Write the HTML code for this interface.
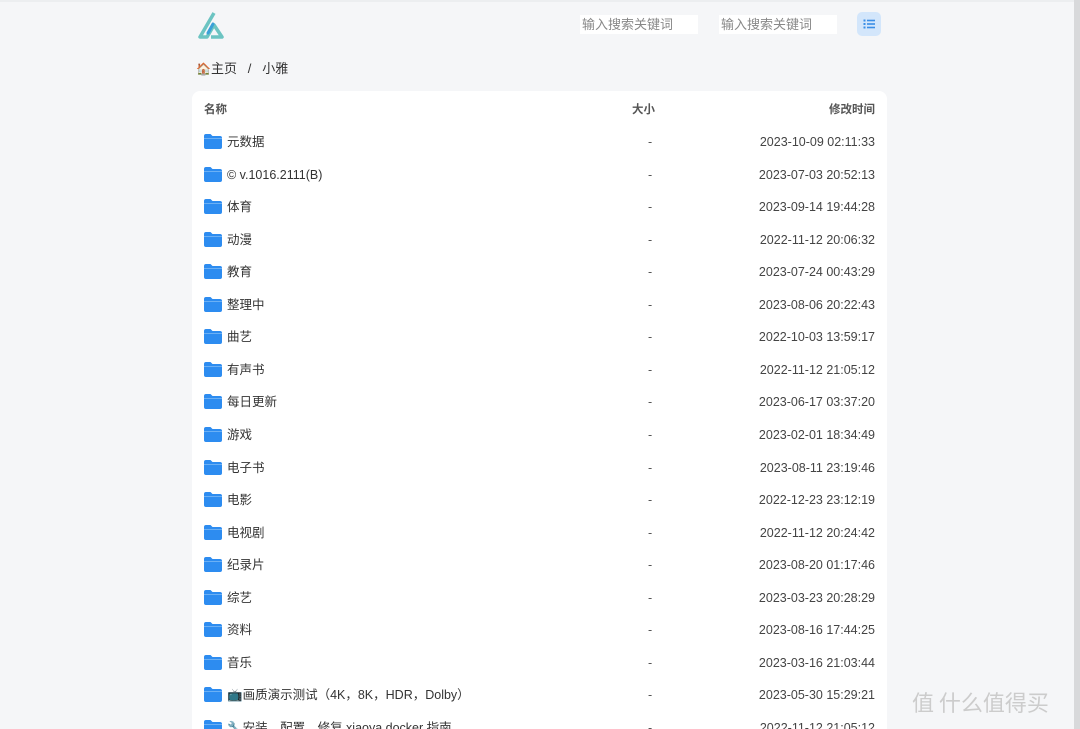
<!DOCTYPE html>
<html style="width:1080px;height:729px;overflow:hidden"><head><meta charset="utf-8"><style>
*{margin:0;padding:0;box-sizing:border-box}
body{width:1080px;height:729px;overflow:hidden;background:#f5f6f8;font-family:"Liberation Sans","Noto Sans CJK SC",sans-serif;color:#333;position:relative;font-size:12px}
.sb{position:absolute;right:0;top:0;width:6px;height:729px;background:#d8d9db}
.top{position:absolute;top:0;left:0;width:1074px;height:2px;background:#eceef0}
.inp{position:absolute;top:15px;height:19px;width:118px;background:#fff;color:#888;font-size:13px;line-height:19px;padding-left:2px}
.btn{position:absolute;left:857px;top:12px;width:24px;height:24px;border-radius:5px;background:#d3e6fb}
.bc{position:absolute;left:196px;top:58px;font-size:13px;color:#333}
.card{position:absolute;left:192px;top:91px;width:695px;height:638px;background:#fff;border-radius:8px 8px 0 0;overflow:hidden}
.row{position:absolute;left:0;width:695px;height:20px;line-height:20px;font-size:12.5px}
.row .n{position:absolute;left:35px}
.row .s{position:absolute;left:456px;color:#555}
.row .t{position:absolute;right:12px;color:#444}
.row svg{position:absolute;left:12px;top:2px}
.hd{font-weight:bold;color:#555;font-size:11.5px}
</style></head><body>
<div class="top"></div><div class="sb"></div>
<svg style="position:absolute;left:198px;top:11px" width="32" height="28" viewBox="0 0 32 28"><path d="M16 2 L2 26 H9 L16 14 L24 26 H13" fill="none" stroke="#6cc4c2" stroke-width="3.5" stroke-linejoin="round"/><path d="M15 13 L10 22" stroke="#3aa0d8" stroke-width="3" stroke-linecap="round"/></svg>
<div class="inp" style="left:580px">输入搜索关键词</div>
<div class="inp" style="left:719px">输入搜索关键词</div>
<div class="btn"><svg width="24" height="24" viewBox="0 0 24 24"><g fill="#3a8ee6"><rect x="6.5" y="7.5" width="2" height="2"/><rect x="6.5" y="11" width="2" height="2"/><rect x="6.5" y="14.5" width="2" height="2"/><rect x="10" y="7.7" width="8" height="1.6"/><rect x="10" y="11.2" width="8" height="1.6"/><rect x="10" y="14.7" width="8" height="1.6"/></g></svg></div>
<div class="bc"><span style="font-size:12px">🏠</span>主页 &nbsp;&nbsp;/&nbsp;&nbsp; 小雅</div>
<div class="card" id="c">
<div class="row hd" style="top:9px"><span style="position:absolute;left:12px">名称</span><span style="position:absolute;left:440px">大小</span><span class="t" style="color:#555">修改时间</span></div>
</div>
<div style="position:absolute;left:912px;top:686px;color:#ccc;font-size:22px;font-family:'Noto Sans CJK SC',sans-serif">值 什么值得买</div>
<script>
var d=[["元数据","2023-10-09 02:11:33"],["© v.1016.2111(B)","2023-07-03 20:52:13"],["体育","2023-09-14 19:44:28"],["动漫","2022-11-12 20:06:32"],["教育","2023-07-24 00:43:29"],["整理中","2023-08-06 20:22:43"],["曲艺","2022-10-03 13:59:17"],["有声书","2022-11-12 21:05:12"],["每日更新","2023-06-17 03:37:20"],["游戏","2023-02-01 18:34:49"],["电子书","2023-08-11 23:19:46"],["电影","2022-12-23 23:12:19"],["电视剧","2022-11-12 20:24:42"],["纪录片","2023-08-20 01:17:46"],["综艺","2023-03-23 20:28:29"],["资料","2023-08-16 17:44:25"],["音乐","2023-03-16 21:03:44"],["📺画质演示测试（4K，8K，HDR，Dolby）","2023-05-30 15:29:21"],["🔧安装，配置，修复 xiaoya docker 指南","2022-11-12 21:05:12"]];
var h="";d.forEach(function(r,i){var y=41+i*32.55;h+='<div class="row" style="top:'+y+'px"><svg width="18" height="15" viewBox="0 0 18 15"><path d="M0 2 Q0 0 2 0 H6.5 L8.5 2 H16 Q18 2 18 4 V13 Q18 15 16 15 H2 Q0 15 0 13 Z" fill="#2d8cf0"/><rect x="0" y="4" width="18" height="1" fill="#6bb0f5"/></svg><span class="n">'+r[0]+'</span><span class="s">-</span><span class="t">'+r[1]+'</span></div>'});
document.getElementById("c").insertAdjacentHTML("beforeend",h);
</script>
</body></html>
